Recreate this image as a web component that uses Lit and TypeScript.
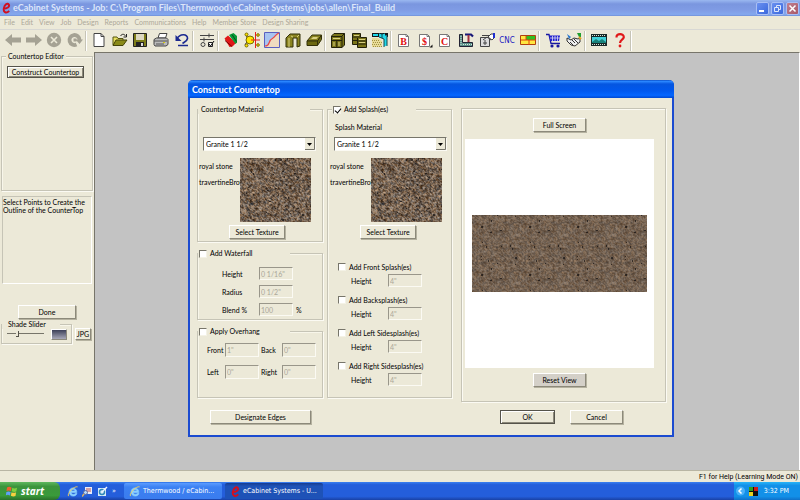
import { LitElement, html, css, svg, TemplateResult } from "lit";
import { customElement, property } from "lit/decorators.js";

const DIALOG = css`Lato, "Liberation Sans", sans-serif`;
const TASK = css`"DejaVu Sans Condensed", "DejaVu Sans", sans-serif`;

/* Shared look of the classic dialog controls. */
const controls = css`
  * { box-sizing: border-box; }
  button, input, select { font: inherit; color: inherit; margin: 0; }
  .btn {
    height: 14px;
    padding: 0;
    background: #ece9d8;
    border: 1px solid;
    border-color: #fff #8c897a #8c897a #fff;
    box-shadow: 1px 1px 0 #b5b2a0;
    line-height: 12px;
    text-align: center;
    white-space: nowrap;
  }
  .btn.default { border-color: #55534a; box-shadow: inset 1px 1px 0 #fff, inset -1px -1px 0 #8c897a; }
  .btn.pressed { background: #d4d0c8; }
  fieldset {
    margin: 0;
    padding: 0;
    min-width: 0;
    border: 1px solid #c6c4b6;
    box-shadow: 1px 1px 0 #fbfaf3, inset 1px 1px 0 #f8f6ea;
  }
  legend {
    display: flex;
    align-items: center;
    gap: 3px;
    height: 9px;
    margin: 0;
    padding: 0 0 0 1px;
    background: #ece9d8;
    line-height: 9px;
    white-space: nowrap;
  }
  .tick {
    appearance: none;
    flex: none;
    width: 8px;
    height: 8px;
    background: #fff;
    border: 1px solid;
    border-color: #77756a #f4f2e6 #f4f2e6 #77756a;
  }
  .tick:checked { position: relative; }
  .tick:checked::after {
    content: "";
    position: absolute;
    left: 2px;
    top: 0;
    width: 3px;
    height: 5px;
    border: solid #000;
    border-width: 0 1px 1px 0;
    transform: rotate(40deg);
  }
`;

/* Speckled stone drawn pixel by pixel. */
@customElement("stone-swatch")
export class StoneSwatch extends LitElement {
  @property({ type: Number }) width = 71;
  @property({ type: Number }) height = 64;
  @property({ type: Number }) contrast = 1;
  @property({ type: Number }) tile = 71;

  static styles = css`
    :host { display: block; }
    canvas { display: block; }
  `;

  render() {
    return html`<canvas width=${this.width} height=${this.height}></canvas>`;
  }

  updated() {
    const canvas = this.renderRoot.querySelector("canvas")!;
    const ctx = canvas.getContext("2d")!;
    const t = this.tile;
    let state = 20011;
    const rnd = () => {
      state = (state + 0x6d2b79f5) | 0;
      let z = Math.imul(state ^ (state >>> 15), 1 | state);
      z = (z + Math.imul(z ^ (z >>> 7), 61 | z)) ^ z;
      return ((z ^ (z >>> 14)) >>> 0) / 4294967296;
    };
    const raw: number[] = [];
    const warm: number[] = [];
    for (let i = 0; i < t * t; i++) {
      raw.push(rnd() - 0.5);
      warm.push(rnd() - 0.5);
    }
    const at = (a: number[], x: number, y: number) => a[((y + t) % t) * t + ((x + t) % t)];
    const soft = (a: number[], x: number, y: number) =>
      at(a, x, y) * 0.6 + (at(a, x + 1, y) + at(a, x, y + 1) + at(a, x + 1, y + 1)) * 0.25;
    const spots: number[][] = [];
    for (let i = 0; i < (t * t) / 150; i++) spots.push([Math.floor(rnd() * t), Math.floor(rnd() * t)]);
    const img = ctx.createImageData(this.width, this.height);
    for (let y = 0; y < this.height; y++) {
      for (let x = 0; x < this.width; x++) {
        const v = soft(raw, x % t, y % t) * 115 * this.contrast;
        const w = soft(warm, x % t, y % t) * 26 * this.contrast;
        const o = (y * this.width + x) * 4;
        img.data[o] = 115 + v + w;
        img.data[o + 1] = 97 + v * 0.94;
        img.data[o + 2] = 81 + v * 0.86 - w;
        img.data[o + 3] = 255;
      }
    }
    ctx.putImageData(img, 0, 0);
    ctx.fillStyle = "rgba(22,18,18,0.7)";
    for (let oy = 0; oy < this.height; oy += t)
      for (let ox = 0; ox < this.width; ox += t)
        spots.forEach(([x, y], i) => ctx.fillRect(ox + x, oy + y, i % 4 ? 1 : 2, i % 3 ? 1 : 2));
  }
}

const icon = (body: TemplateResult) => html`<svg width="16" height="16" viewBox="0 0 16 16" aria-hidden="true">${body}</svg>`;

const page = svg`<path d="M3 1.5h7l3 3v10H3z" fill="#fff" stroke="#444"/><path d="M10 1.5v3h3" fill="none" stroke="#444"/>`;
const letterPage = (t: string) => svg`<path d="M2.500 2.500h8l2 2v10h-10z" fill="#fff" stroke="#777"/><path d="M10 2.500v2h2.500" fill="none" stroke="#777"/><text x="7.500" y="12.500" font-family="Liberation Serif, serif" font-weight="bold" font-size="10" fill="#e01010" text-anchor="middle">${t}</text>`;
const ie = svg`<path d="M12.500 9.500H5.200c.3 2.600 4 3.300 5.300 1.200h2.200c-1.800 5-10 4.300-10-2.200 0-6.500 9.800-6.800 9.800 1z M5.300 7.400h4.900c-.4-2.400-4.400-2.500-4.900 0z" fill="#8cd0ff" stroke="#8cd0ff" stroke-width=".8"/><path d="M2 14C-.5 12 8 1 13.500 2.200" fill="none" stroke="#f0d060" stroke-width="1.200"/>`;
const logo = svg`<path d="M3.500 8.500c5 0 9-2.500 7.500-5.500S5 2 4 8s3.500 7.500 7.500 3.500" fill="none" stroke="#d01020" stroke-width="2.800"/>`;

const groups: { name: string; art: TemplateResult }[][] = [
  [
    { name: "Back", art: svg`<path d="M0 8l7-6v3.500h9v5H7V14z" fill="#a5a294"/>` },
    { name: "Forward", art: svg`<path d="M16 8L9 2v3.500H0v5h9V14z" fill="#a5a294"/>` },
    { name: "Stop", art: svg`<circle cx="8" cy="8" r="7.200" fill="#a5a294"/><path d="M5 5l6 6M11 5l-6 6" stroke="#ece9d8" stroke-width="1.600"/>` },
    { name: "Refresh", art: svg`<path d="M12.500 8A5 5 0 1 0 9.500 12.600" fill="none" stroke="#a5a294" stroke-width="3.800"/><path d="M8.500 7.500H16l-3.500 4.500zM6.500 6.500h3v3h-3z" fill="#a5a294"/>` },
  ],
  [
    { name: "New", art: page },
    { name: "Open", art: svg`<path d="M1 13V5h4l1 1.500h5V8" fill="#e8e060" stroke="#555510"/><path d="M1 13.500L4 8h11l-4 5.500z" fill="#8a8a18" stroke="#444408"/><path d="M8.500 4c1.500-2.500 4-2 5 0M14.500 2v3h-3" fill="none" stroke="#222"/>` },
    { name: "Save", art: svg`<path d="M1.500 1.500h13v13h-13z" fill="#7c7c18" stroke="#222"/><path d="M4 2h8v6H4z" fill="#ddd8c0"/><path d="M4 10h8v4.500H4z" fill="#222"/><path d="M9 11h2v3H9z" fill="#ddd"/>` },
    { name: "Print", art: svg`<path d="M5 6l1.500-4.500H14L12.500 6z" fill="#fff" stroke="#444"/><path d="M1 7.500L3.500 6h10l1.500 1.500v5l-2 1.500H2l-1-1.500z" fill="#bbb" stroke="#444"/><path d="M1 9h13M3 12h8" stroke="#555"/><path d="M10 10.500h2" stroke="#d5c810"/>` },
    { name: "Undo", art: svg`<path d="M3 7C6 1 14 2 13.500 6.500 13 9.500 10 10 8.500 11.500" fill="none" stroke="#1c2a90" stroke-width="1.600"/><path d="M1.500 3v6h6z" fill="#1c2a90"/><path d="M4 13.500h10" stroke="#1c2a90" stroke-width="1.500"/>` },
  ],
  [{ name: "Settings", art: svg`<path d="M1 3.500h14M1 7.500h14M10 1.500v4M5 5.500v4" stroke="#444"/><circle cx="4" cy="12.500" r="2" fill="none" stroke="#444"/><path d="M9.500 10.500h4v4h-4z" fill="#fff" stroke="#222"/><path d="M10 12l1.500 2L15 9" fill="none" stroke="#111"/>` }],
  [
    { name: "Materials", art: svg`<path d="M1.500 6.500L5 3.500l8 7.500-3.500 3.500-3 .5z" fill="#e01818"/><path d="M2 8.500l7 6" stroke="#700" fill="none"/><path d="M6 3l4.500-2L14 4v6.500L12.500 12z" fill="#0a9a38"/><path d="M9 2.500l4.500 7" stroke="#045018"/>` },
    { name: "Joints", art: svg`<path d="M4 8L2 2M4 8l-3 5M4 8h4" stroke="#222"/><circle cx="6" cy="8" r="4" fill="#ffe800" stroke="#7a6a00"/><circle cx="2.500" cy="2.500" r="1.500" fill="#ffe800" stroke="#7a6a00"/><circle cx="2.500" cy="13.500" r="1.500" fill="#ffe800" stroke="#7a6a00"/><path d="M11.500 0v16M7 8h9" stroke="#e82020"/><circle cx="14" cy="3" r="1.300" fill="#ffe800" stroke="#7a6a00"/><circle cx="14" cy="13" r="1.300" fill="#ffe800" stroke="#7a6a00"/>` },
    { name: "Profile", art: svg`<path d="M.5 .5h15v15H.5z" fill="#f0dcc0" stroke="#5a60c0"/><path d="M1 1h14C12 2 11 5 9 6s-3 2-4 5c-.5 2-2 3-4 3z" fill="#a8c4f0"/><path d="M1 14c3 0 3.500-1 4-3 1-3 2-4 4-5s3-4 6-5" fill="none" stroke="#e84848" stroke-width="1.200"/>` },
    { name: "Panel", art: svg`<path d="M1 6l4-4h10v12l-3 1V6H8v9H1z" fill="#8a8420" stroke="#333008"/><path d="M4 6v9M8 5l-2-1M12 5l2-2" stroke="#d8d080"/>` },
    { name: "Board", art: svg`<path d="M1 9l5-6h9.500l-4 6z" fill="#8a8420" stroke="#333008"/><path d="M1 9h10.500v4.500H1zM11.500 9l4-6v4.500l-4 6" fill="#6c6810" stroke="#333008"/><path d="M5 7l2-2h5l-1.500 2z" fill="#d8d080"/>` },
  ],
  [
    { name: "Cabinet", art: svg`<path d="M1.500 4L4 1.500h10.500V13L12 15.500H1.500z" fill="#7a7418" stroke="#222008"/><path d="M1.500 4.500H12v11M12 4l2.500-2.500M6.800 9v6M2 8.500h10" stroke="#222008" fill="none"/><path d="M3 6.500h7M4 10v4M9 10v4" stroke="#d8d080"/>` },
    { name: "Cabinets", art: svg`<path d="M1.500 1.500h8v4h6v10h-9v-3h-5z" fill="#7a7418" stroke="#222008"/><path d="M2 5h7M2 8.500h5M6.500 6v8M7 9h8M7 12h8" stroke="#222008"/><path d="M3 3.500h5M8 7.500h6M8 10.500h6" stroke="#d8d080"/>` },
    { name: "Room", art: svg`<path d="M0 1h16v4H0z" fill="#181818"/><path d="M1 2h5v2H1zM7 1.500l3 1 3-1v2h2v10l-3 1V7L7 5z" fill="#20d8e8"/><path d="M7 5l5 2v8M10 1v5M15 4v10" fill="none" stroke="#104850"/><path d="M0 6h6l4 3v6H0z" fill="#e8dc98"/><path d="M0 8.500h8M1 10.500h9M0 12.500h10M1 14.500h9" stroke="#a09040" stroke-dasharray="1 1"/>` },
  ],
  [
    { name: "Bid", art: letterPage("B") },
    { name: "Cost", art: svg`${letterPage("$")}<path d="M15.500 12.500v3h-3z" fill="#111"/>` },
    { name: "Cut list", art: letterPage("C") },
    { name: "Tools", art: svg`<path d="M1.500 2.500h3v8h10v4h-13z" fill="#5a9088" stroke="#223"/><path d="M3 4v9M5 12.500h9" stroke="#d8e8e0" stroke-dasharray="1 1"/><path d="M7 2.500h6l2 2" fill="none" stroke="#181878" stroke-width="2.200"/><path d="M10.500 3v7" stroke="#a03040" stroke-width="2"/>` },
    { name: "Drawing", art: svg`<path d="M1.500 5.500h9v9h-9z" fill="#ddd" stroke="#444"/><path d="M3 3.500h7M4 8l4-3 4 3M4 11h4M6 13V8" fill="none" stroke="#444"/><path d="M9 5l3-3h3v4l-2 2z" fill="#fff" stroke="#444"/><path d="M14 1h2v5h-2z" fill="#2030d0"/>` },
    { name: "CNC", art: svg`<text x="8" y="11" text-anchor="middle" font-size="8" font-family="DejaVu Sans Condensed, sans-serif" fill="#1818c0">CNC</text>` },
    { name: "Nesting", art: svg`<path d="M.5 3.500h15v9H.5z" fill="#ffe840" stroke="#b04010"/><path d="M6 4h9v4H6z" fill="#30c020"/><path d="M1 8h15M6 8V4M9 8v5" stroke="#e04010"/>` },
  ],
  [
    { name: "Cart", art: svg`<path d="M1 2.500h3l2 9h9" fill="none" stroke="#1818a0" stroke-width="1.300"/><path d="M4 3.500h11L14 9H5.500z" fill="#2020d0"/><path d="M5 6h10M7.500 4v5M10 4v5M12.500 4v5" stroke="#dcdcf0" stroke-width=".8"/><circle cx="7" cy="14" r="1.600" fill="#1818a0"/><circle cx="13" cy="14" r="1.600" fill="#1818a0"/>` },
    { name: "Partners", art: svg`<path d="M1 6l4 2 3-2 4 1 2-1v4l-5 4-4-1-4-4z" fill="#eee" stroke="#333"/><path d="M6 8l3 3M8 7l4 4M4 10l3 3" stroke="#333"/><path d="M1 2l4 3-2 2z" fill="#2878d0"/><path d="M11 1h4v4h-2z" fill="#20a030"/><path d="M13 5l2 2" stroke="#e0a020" stroke-width="2"/>` },
  ],
  [
    { name: "Video", art: svg`<path d="M0 2h16v12H0z" fill="#182828"/><path d="M1 5h14v6H1z" fill="#40d0d8"/><path d="M1 10l4-3 3 2 3-2 4 3v1H1z" fill="#188078"/><path d="M1 3.500h14M1 12.500h14" stroke="#d8e8d8" stroke-dasharray="1 1"/>` },
    { name: "Help", art: svg`<path d="M4.500 5.500C4 1 12 1 11.800 5.200 11.500 8 8.200 7.500 8 11" fill="none" stroke="#e01818" stroke-width="2.200"/><circle cx="8" cy="14" r="1.400" fill="#e01818"/>` },
  ],
];

@customElement("construct-dialog")
export class ConstructDialog extends LitElement {
  static styles = [
    controls,
    css`
      :host {
        display: block;
        border: solid #1b4bd0;
        border-width: 0 2px 2px;
        border-radius: 5px 5px 0 0;
        background: #ece9d8;
        font: 7px/10px ${DIALOG};
        color: #000;
      }
      .caption {
        height: 18px;
        margin: 0 -2px;
        padding-left: 4px;
        border-radius: 5px 5px 0 0;
        background: linear-gradient(#0a50c8, #2a86ff 8%, #0556e0 22%, #0058ee 60%, #0466ff 85%, #0048d0);
        color: #fff;
        font: bold 9px/20px ${DIALOG};
      }
      .body { padding: 7px 6px 11px 7px; }
      .columns { display: flex; align-items: flex-start; }
      .left { flex: none; width: 126px; display: flex; flex-direction: column; gap: 7px; }
      .splash { flex: none; width: 125px; height: 293px; margin-left: 4px; }
      .right {
        flex: 1;
        margin: 3px 0 0 9px;
        padding: 9px 11px 14px 3px;
        border: 1px solid #c6c4b6;
        box-shadow: inset 1px 1px 0 #fbfaf3, 1px 1px 0 #fbfaf3;
        display: flex;
        flex-direction: column;
        align-items: center;
      }
      .w110 { width: 112px; padding-left: 3px; }
      .w90 { width: 92px; }
      .w80 { width: 84px; margin-left: 4px; }
      .material { display: flex; flex-direction: column; padding: 0 0 2px 1px; }
      .splash .material { padding-left: 2px; }
      .heading { height: 23px; padding: 8px 0 5px 5px; }
      .combo { position: relative; width: 113px; height: 14px; margin: 0 0 7px 4px; }
      .combo select {
        appearance: none;
        display: block;
        width: 100%;
        height: 14px;
        padding: 0 2px;
        background: #fff;
        border: 1px solid;
        border-color: #77756a #fbfaf3 #fbfaf3 #77756a;
        border-radius: 0;
        color: #000;
      }
      .combo svg { position: absolute; right: 1px; top: 1px; pointer-events: none; }
      .sample { display: grid; grid-template-columns: 41px 71px; line-height: 16px; }
      .names { white-space: nowrap; }
      .names div { height: 16px; }
      .material .btn { width: 56px; margin: 3px 0 0 30px; }
      .field {
        width: 34px;
        height: 13px;
        padding: 0 1px;
        background: #ece9d8;
        border: 1px solid;
        border-color: #99968a #fbfaf3 #fbfaf3 #99968a;
        border-radius: 0;
        color: #aaa798;
      }
      .water .rows { display: grid; gap: 5px; padding: 9px 0 3px 24px; }
      .row { display: grid; align-items: center; grid-template-columns: 37px 34px auto; }
      .unit { padding-left: 3px; }
      .over .rows {
        display: grid;
        grid-template-columns: 18px 36px 21px 34px;
        gap: 8px 0;
        padding: 7px 0 18px 9px;
        align-items: center;
      }
      .over .field { height: 14px; }
      .sides { display: grid; gap: 8px; padding: 21px 0 0 10px; }
      .side { display: grid; gap: 2px; }
      .check { display: flex; align-items: center; gap: 3px; height: 10px; }
      .side .row { padding-left: 13px; }
      .view {
        width: 100%;
        height: 229px;
        margin: 7px 0 5px;
        background: #fff;
        display: flex;
        align-items: center;
        justify-content: center;
      }
      .right .btn { width: 53px; }
      .foot { display: flex; padding: 8px 0 0 13px; }
      .edges { width: 101px; }
      .ok { width: 55px; margin-left: 189px; }
      .cancel { width: 53px; margin-left: 15px; }
    `,
  ];

  private material(id: string, heading: string) {
    return html`<div class="material">
      <label class="heading" for=${id}>${heading}</label>
      <div class="combo">
        <select id=${id} aria-label="Material"><option>Granite 1 1/2</option></select>
        <svg width="10" height="12" viewBox="0 0 10 12" aria-hidden="true">
          <path d="M0 0h10v12H0z" fill="#ece9d8" /><path d="M9.500 0v11.500H0" fill="none" stroke="#77756a" />
          <path d="M2 5h5L4.500 8z" fill="#000" />
        </svg>
      </div>
      <div class="sample">
        <div class="names"><div>royal stone</div><div>travertineBrow</div></div>
        <stone-swatch></stone-swatch>
      </div>
      <button class="btn">Select Texture</button>
    </div>`;
  }

  private field(id: string, label: string, value: string, unit = "") {
    return html`<div class="row">
      <label for=${id}>${label}</label><input class="field" id=${id} .value=${value} disabled /><span class="unit">${unit}</span>
    </div>`;
  }

  private cell(id: string, label: string, value: string) {
    return html`<label for=${id}>${label}</label><input class="field" id=${id} .value=${value} disabled />`;
  }

  render() {
    const sides = ["Add Front Splash(es)", "Add Backsplash(es)", "Add Left Sidesplash(es)", "Add Right Sidesplash(es)"];
    return html`
      <div class="caption">Construct Countertop</div>
      <div class="body">
        <div class="columns">
          <div class="left">
            <fieldset><legend class="w110">Countertop Material</legend>${this.material("top", "")}</fieldset>
            <fieldset class="water">
              <legend class="w90"><input type="checkbox" class="tick" id="wf" /><label for="wf">Add Waterfall</label></legend>
              <div class="rows">
                ${this.field("wh", "Height", `0 1/16"`)} ${this.field("wr", "Radius", `0 1/2"`)}
                ${this.field("wb", "Blend %", "100", "%")}
              </div>
            </fieldset>
            <fieldset class="over">
              <legend class="w90"><input type="checkbox" class="tick" id="oh" /><label for="oh">Apply Overhang</label></legend>
              <div class="rows">
                ${this.cell("of", "Front", `1"`)} ${this.cell("ob", "Back", `0"`)}
                ${this.cell("ol", "Left", `0"`)} ${this.cell("or", "Right", `0"`)}
              </div>
            </fieldset>
          </div>
          <fieldset class="splash">
            <legend class="w80"><input type="checkbox" class="tick" id="sp" checked /><label for="sp">Add Splash(es)</label></legend>
            ${this.material("splash", "Splash Material")}
            <div class="sides">
              ${sides.map(
                (s, i) => html`<div class="side">
                  <div class="check"><input type="checkbox" class="tick" id="s${i}" /><label for="s${i}">${s}</label></div>
                  ${this.field(`h${i}`, "Height", `4"`)}
                </div>`
              )}
            </div>
          </fieldset>
          <div class="right">
            <button class="btn">Full Screen</button>
            <div class="view"><stone-swatch width="175" height="77" contrast="0.5" tile="48"></stone-swatch></div>
            <button class="btn pressed">Reset View</button>
          </div>
        </div>
        <div class="foot">
          <button class="btn edges">Designate Edges</button>
          <button class="btn default ok">OK</button>
          <button class="btn cancel">Cancel</button>
        </div>
      </div>
    `;
  }
}

@customElement("app-root")
export class AppRoot extends LitElement {
  static styles = [
    controls,
    css`
      :host {
        display: grid;
        grid-template-rows: 16px 14px 22px 1fr 12px 18px;
        height: 100vh;
        overflow: hidden;
        background: #ece9d8;
        color: #000;
        font: 7px/10px ${DIALOG};
      }
      .title {
        display: flex;
        align-items: center;
        gap: 2px;
        padding: 0 1px;
        background: linear-gradient(#9ab8f0, #7a96df 25%, #7f9be4 60%, #84a8ee 90%, #7090d8);
        color: #dce6fa;
        font: bold 9px/16px ${DIALOG};
        white-space: nowrap;
      }
      .title h1 { flex: 1; margin: 0; font: inherit; overflow: hidden; }
      .ctl {
        width: 13px;
        height: 13px;
        padding: 0;
        border: 1px solid #a8bff5;
        border-radius: 2px;
        background: linear-gradient(135deg, #6a90f0, #3a68dc);
      }
      .ctl.close { background: linear-gradient(135deg, #c08090, #a85868); }
      .ctl svg { display: block; }
      .menu {
        display: flex;
        align-items: center;
        gap: 6px;
        padding-left: 4px;
        border-bottom: 1px solid #d8d8d4;
        color: #aca899;
        line-height: 13px;
      }
      .menu button { background: none; border: 0; padding: 0; }
      .tools { display: flex; align-items: center; padding-left: 3px; }
      .group { display: flex; }
      .g1 { width: 21px; }
      .g2 { width: 42px; }
      .g3 { width: 62px; }
      .g4 { width: 82px; }
      .g5 { width: 103px; }
      .g7 { width: 144px; }
      .tool { flex: 1; display: flex; justify-content: center; min-width: 0; height: 20px; padding: 1px 0; border: 0; background: none; }
      .tool svg { flex: none; overflow: visible; }
      .sep { width: 4px; height: 20px; border-left: 1px solid #c6c4b6; box-shadow: inset 1px 0 0 #fff; }
      .main { display: grid; grid-template-columns: 94px 1fr; min-height: 0; }
      .side { display: flex; flex-direction: column; padding: 0 2px 0 1px; }
      .editor { height: 139px; margin-right: -1px; }
      .editor .btn { display: block; width: 77px; height: 12px; margin: 5px 0 0 5px; line-height: 10px; }
      .editor legend { margin-left: 4px; padding: 0 2px; }
      .hint { height: 88px; margin: 5px 0 21px 1px; padding-top: 1px; border: 1px solid; border-color: #c6c4b6 #fff #fff #c6c4b6; line-height: 8px; }
      .done { flex: none; width: 58px; margin-left: 17px; }
      .shade { display: flex; align-items: flex-end; gap: 3px; margin-top: 1px; }
      .shade fieldset { flex: none; width: 71px; height: 24px; }
      .shade legend { width: 58px; padding-left: 6px; }
      .controls { display: flex; align-items: center; justify-content: space-between; height: 12px; padding: 0 4px 2px 5px; }
      .range { appearance: none; width: 37px; height: 8px; background: linear-gradient(#77756a, #77756a) 0 3px / 100% 1px no-repeat; }
      .range::-webkit-slider-thumb { appearance: none; width: 3px; height: 6px; background: #ece9d8; border: solid #55534a; border-width: 0 1px 1px 0; }
      .swatch { width: 16px; height: 11px; padding: 0; background: linear-gradient(#3c4058, #a8a8b8); border: 1px solid; border-color: #fff #8c897a #8c897a #fff; }
      .shade .jpg { flex: none; width: 16px; height: 12px; line-height: 10px; margin-bottom: 4px; }
      .desk { position: relative; border: solid; border-width: 1px 1px 0 1px; border-color: #77756a #fff #fff #77756a; background: #c3c3c3; }
      construct-dialog { position: absolute; left: 93px; top: 27px; width: 486px; }
      .status { border-top: 1px solid #b8b5a4; padding-right: 2px; text-align: right; font-family: Roboto, sans-serif; line-height: 12px; }
      .taskbar {
        display: flex;
        align-items: stretch;
        background: linear-gradient(#3a80f0, #245edb 15%, #245edb 80%, #1941a5);
        color: #fff;
        font: 7px/18px ${TASK};
      }
      .start {
        display: flex;
        align-items: center;
        gap: 3px;
        width: 60px;
        padding: 0 0 0 6px;
        border: 0;
        border-radius: 0 6px 6px 0;
        background: linear-gradient(#5fb85f, #3c943c 25%, #3a9a3a 75%, #2a702a);
        color: #fff;
        font: italic bold 10px/16px "Open Sans", sans-serif;
      }
      .quick { display: flex; align-items: center; gap: 4px; width: 64px; padding-left: 7px; }
      .quick button { display: flex; padding: 0; border: 0; background: none; }
      .task {
        display: flex;
        align-items: center;
        gap: 3px;
        width: 98px;
        height: 16px;
        margin: 1px 3px 0 0;
        padding: 0 0 0 5px;
        border: 0;
        border-radius: 2px;
        background: linear-gradient(#5c9cff, #3c81f3 25%, #3a7cee);
        color: #fff;
        white-space: nowrap;
      }
      .task.on { background: linear-gradient(#173c90, #1e52b7 20%); }
      .tray {
        display: flex;
        align-items: center;
        gap: 4px;
        margin-left: auto;
        padding: 0 11px 0 2px;
        background: linear-gradient(#28b4f8, #1290e8 20%, #1290e8 80%, #0f70c8);
      }
      .tray span { padding-left: 2px; }
    `,
  ];

  render() {
    const menus = ["File", "Edit", "View", "Job", "Design", "Reports", "Communications", "Help", "Member Store", "Design Sharing"];
    return html`
      <header class="title">
        <svg width="10" height="12" viewBox="0 0 14 15" aria-hidden="true">${logo}</svg>
        <h1>eCabinet Systems - Job: C:\\Program Files\\Thermwood\\eCabinet Systems\\jobs\\allen\\Final_Build</h1>
        <button class="ctl" aria-label="Minimize"><svg width="11" height="11"><path d="M2 8h5" stroke="#fff" stroke-width="2" /></svg></button>
        <button class="ctl" aria-label="Restore"><svg width="11" height="11"><path d="M4.500 4V2.500h4v4H7M2.500 4.500h4v4h-4z" fill="none" stroke="#dce6fa" /></svg></button>
        <button class="ctl close" aria-label="Close"><svg width="11" height="11"><path d="M2.500 2.500l6 6M8.500 2.500l-6 6" stroke="#fff" stroke-width="1.500" /></svg></button>
      </header>
      <nav class="menu">${menus.map((m) => html`<button>${m}</button>`)}</nav>
      <div class="tools">
        ${groups.map(
          (g) => html`<div class="group g${g.length}">
              ${g.map((t) => html`<button class="tool" aria-label=${t.name}>${icon(t.art)}</button>`)}
            </div>
            <span class="sep"></span>`
        )}
      </div>
      <div class="main">
        <aside class="side">
          <fieldset class="editor">
            <legend>Countertop Editor</legend>
            <button class="btn default">Construct Countertop</button>
          </fieldset>
          <div class="hint">Select Points to Create the Outline of the CounterTop</div>
          <button class="btn done">Done</button>
          <div class="shade">
            <fieldset>
              <legend><label for="shade">Shade Slider</label></legend>
              <div class="controls">
                <input class="range" id="shade" type="range" min="0" max="100" value="26" />
                <button class="swatch" aria-label="Shade"></button>
              </div>
            </fieldset>
            <button class="btn jpg">JPG</button>
          </div>
        </aside>
        <main class="desk"><construct-dialog role="dialog" aria-label="Construct Countertop"></construct-dialog></main>
      </div>
      <div class="status">F1 for Help (Learning Mode ON)</div>
      <footer class="taskbar">
        <button class="start">
          <svg width="12" height="12" viewBox="0 0 12 12" aria-hidden="true">
            <path d="M1 2.500q2-1.500 4.500 0L4.800 6Q3 5 .5 6z" fill="#f06030" /><path d="M6.300 2.800q2 1.200 4.700 0L10.300 6.400q-2 1-4.600-.1z" fill="#80d040" />
            <path d="M.4 7q2-1 4.200 0L4 10.500q-2-1.500-4.200-.2z" fill="#60a0f8" /><path d="M5.500 7.300q2.300 1 4.600 0L9.500 11q-2.200 1-4.600-.2z" fill="#f8d040" />
          </svg>
          start
        </button>
        <div class="quick">
          <button aria-label="Internet Explorer"><svg width="11" height="12" viewBox="0 0 14 15">${ie}</svg></button>
          <button aria-label="Search"><svg width="11" height="11"><path d="M3 1h7v7H3z" fill="#e8ecf8" /><path d="M4 3h5M4 5h5" stroke="#c05050" /><circle cx="3.500" cy="6.500" r="2" fill="#b8d8f8" stroke="#5868a0" /><path d="M2 8L0 10.500" stroke="#e0b060" stroke-width="1.500" /></svg></button>
          <button aria-label="Mail"><svg width="11" height="11"><path d="M1 2h8v8H1z" fill="#d8ecf8" /><circle cx="5" cy="6" r="2.500" fill="none" stroke="#3088b8" stroke-width="1.500" /><path d="M5 6l5-5" stroke="#f0f4ff" stroke-width="1.500" /></svg></button>
          <span>»</span>
        </div>
        <button class="task"><svg width="11" height="12" viewBox="0 0 14 15" aria-hidden="true">${ie}</svg>Thermwood / eCabin...</button>
        <button class="task on"><svg width="10" height="11" viewBox="0 0 14 15" aria-hidden="true">${logo}</svg>eCabinet Systems - U...</button>
        <div class="tray">
          <svg width="9" height="10" viewBox="0 0 9 10" aria-hidden="true"><circle cx="4.500" cy="5" r="4.500" fill="#48b0f8" /><path d="M5.500 2.500L3 5l2.500 2.500" fill="none" stroke="#fff" stroke-width="1.500" /></svg>
          <svg width="9" height="9" viewBox="0 0 9 9" aria-hidden="true"><path d="M0 0h9v9H0z" fill="#111" /><path d="M0 0h4v4H0z" fill="#30a020" /><path d="M5 0h4v4H5z" fill="#d01818" /><path d="M0 5h4v4H0z" fill="#e8d020" /></svg>
          <span>3:32 PM</span>
        </div>
      </footer>
    `;
  }
}
